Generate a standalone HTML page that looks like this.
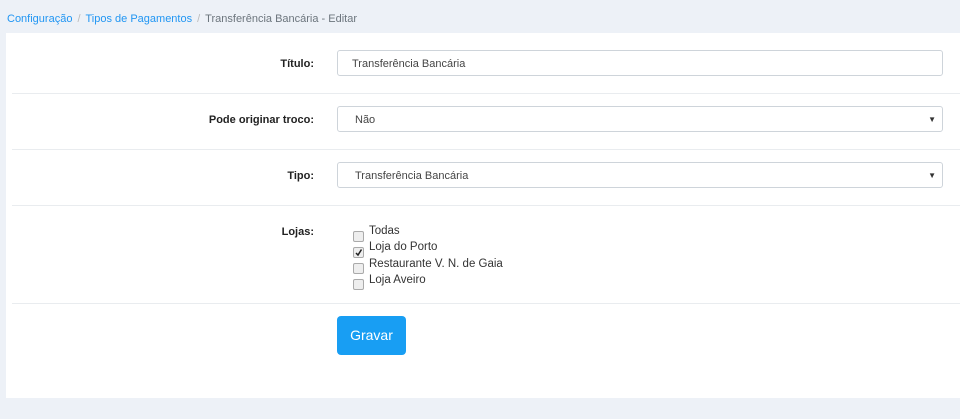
<!DOCTYPE html>
<html><head><meta charset="utf-8"><style>
body{margin:0;width:960px;height:419px;background:#edf1f7;font-family:"Liberation Sans",sans-serif;font-size:11px;color:#333;position:relative;overflow:hidden}
.bc{position:absolute;left:7px;top:13px;font-size:11px;color:#6c757d}
.bc a{color:#2196f3;text-decoration:none}
.bc .s{color:#bbb;margin:0 5px}
.panel{position:absolute;left:6px;top:33px;width:954px;height:365px;background:#fff}
.hr{position:absolute;left:12px;right:0;height:1px;background:#e9ecef}
.lbl{position:absolute;right:646px;font-weight:bold;font-size:11px;color:#222}
.inp{position:absolute;left:337px;width:604px;height:24px;border:1px solid #ced4da;border-radius:3px;background:#fff;font-size:11px;line-height:26px;padding-left:14px;box-sizing:content-box;color:#444}
.inp.sel{padding-left:17px}
.arr{position:absolute;right:6px;top:0;font-size:8px;color:#333}
.cb{position:absolute;left:353px;width:9px;height:9px;border:1px solid #aaa;border-radius:2px;background:#eee}
.ct{position:absolute;left:369px;font-size:11.5px;color:#333}
.btn{position:absolute;left:337px;top:316px;width:69px;height:39px;background:#189ef3;border-radius:4px;color:#fff;font-size:14px;text-align:center;line-height:39px}
</style></head><body>
<div class="bc"><a>Configuração</a><span class="s">/</span><a>Tipos de Pagamentos</a><span class="s">/</span>Transferência Bancária - Editar</div>
<div class="panel"></div>
<div class="hr" style="top:93px"></div>
<div class="hr" style="top:149px"></div>
<div class="hr" style="top:205px"></div>
<div class="hr" style="top:303px"></div>
<div class="lbl" style="top:58px">Título:</div>
<div class="inp" style="top:50px;width:590px">Transferência Bancária</div>
<div class="lbl" style="top:114px">Pode originar troco:</div>
<div class="inp sel" style="top:106px;width:587px">Não<span class="arr">▼</span></div>
<div class="lbl" style="top:170px">Tipo:</div>
<div class="inp sel" style="top:162px;width:587px">Transferência Bancária<span class="arr">▼</span></div>
<div class="lbl" style="top:226px">Lojas:</div>
<div class="cb" style="top:231px"></div><div class="ct" style="top:225px">Todas</div>
<div class="cb" style="top:247px"><svg width="9" height="9" style="position:absolute;left:0;top:0"><path d="M2 5 L4 7 L7.5 1.5" stroke="#222" stroke-width="1.5" fill="none"/></svg></div><div class="ct" style="top:241px">Loja do Porto</div>
<div class="cb" style="top:263px"></div><div class="ct" style="top:258px">Restaurante V. N. de Gaia</div>
<div class="cb" style="top:279px"></div><div class="ct" style="top:274px">Loja Aveiro</div>
<div class="btn">Gravar</div>
</body></html>
